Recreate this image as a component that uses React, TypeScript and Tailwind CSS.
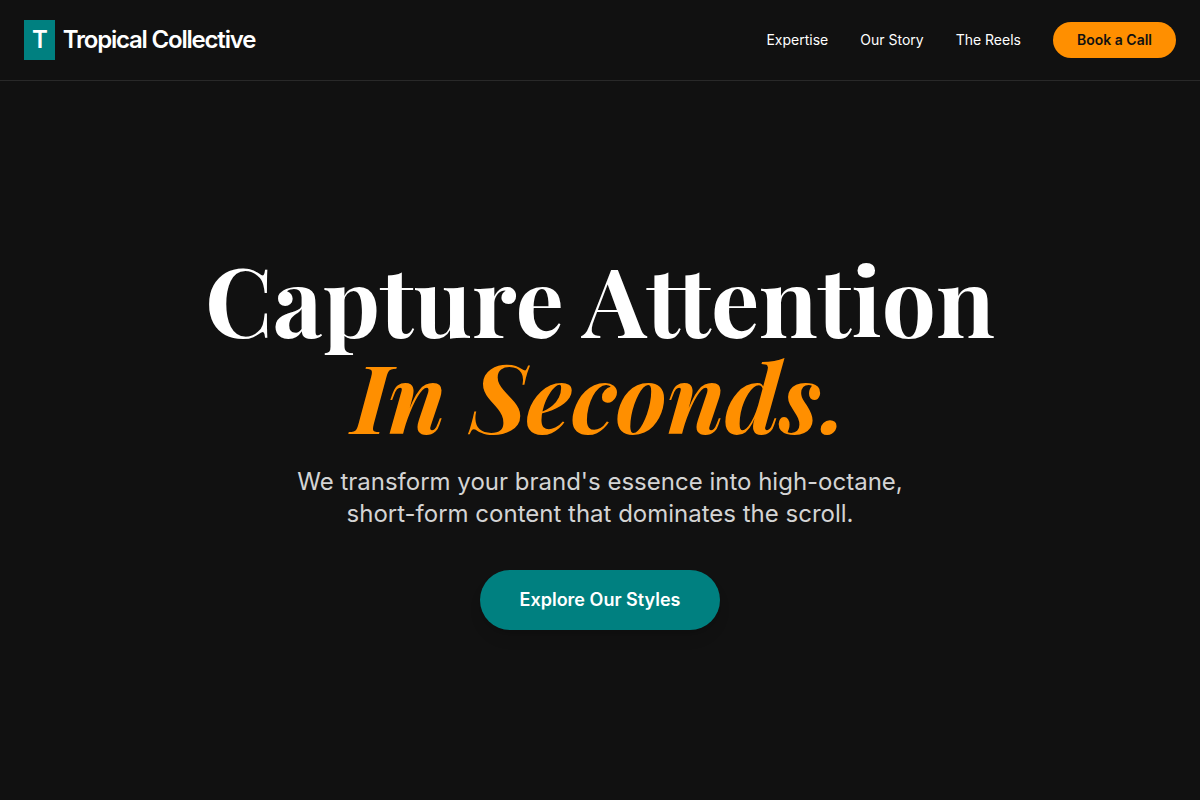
const links = [
  { label: "Expertise", href: "#expertise" },
  { label: "Our Story", href: "#story" },
  { label: "The Reels", href: "#reels" },
];

function Header() {
  return (
    <header className="fixed inset-x-0 top-0 z-10 border-b border-white/10 bg-[#111111]">
      <div className="flex h-20 items-center justify-between px-6">
        <a href="#" className="flex items-center gap-2 text-2xl font-semibold tracking-tighter">
          <span className="bg-[#008080] px-2 py-1">T</span>
          <span>Tropical Collective</span>
        </a>
        <nav className="flex items-center gap-8 text-sm">
          {links.map((link) => (
            <a key={link.href} href={link.href} className="hover:text-[#FF8F00]">
              {link.label}
            </a>
          ))}
          <button type="button" className="rounded-full bg-[#FF8F00] px-6 py-2 font-semibold text-[#111111]">
            Book a Call
          </button>
        </nav>
      </div>
    </header>
  );
}

function Hero() {
  return (
    <section className="flex min-h-screen flex-col items-center justify-center px-6 pt-20 text-center">
      <h1 className="mb-6 font-['Playfair_Display','Liberation_Serif',serif] text-8xl leading-none font-bold">
        Capture Attention
        <br />
        <span className="text-[#FF8F00] italic">In Seconds.</span>
      </h1>
      <p className="mb-10 max-w-2xl text-2xl text-neutral-300">
        We transform your brand's essence into high-octane, short-form content that dominates the scroll.
      </p>
      <button type="button" className="rounded-full bg-[#008080] px-10 py-4 text-lg font-semibold shadow-lg">
        Explore Our Styles
      </button>
    </section>
  );
}

export default function App() {
  return (
    <div className="min-h-screen bg-[#111111] font-['Inter',sans-serif] text-white">
      <Header />
      <main>
        <Hero />
      </main>
    </div>
  );
}
